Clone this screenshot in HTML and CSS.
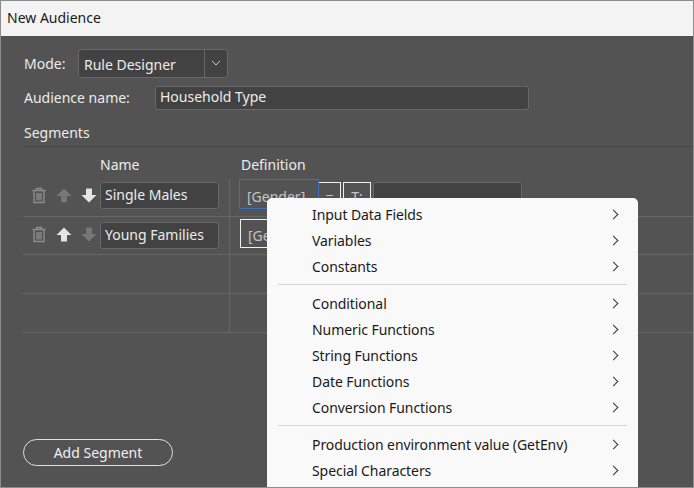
FILE: index.html
```html
<!DOCTYPE html>
<html lang="en">
<head>
    <meta charset="UTF-8">
    <title>New Audience</title>
    <link rel="stylesheet" href="styles.css">
</head>
<body>
    <div class="window">
        <div class="titlebar">New Audience</div>

        <div class="content">
            <div class="mode-row">
                <span class="label">Mode:</span>
                <div class="select">
                    <span class="select-value">Rule Designer</span>
                    <span class="select-arrow">
                        <svg width="10" height="6" viewBox="0 0 10 6"><path d="M1 1l4 4 4-4" fill="none" stroke="#c8c8c8" stroke-width="1"/></svg>
                    </span>
                </div>
            </div>

            <div class="name-row">
                <span class="label">Audience name:</span>
                <div class="field name-field">Household Type</div>
            </div>

            <div class="section-title">Segments</div>

            <div class="table-head">
                <span class="head-name">Name</span>
                <span class="head-def">Definition</span>
            </div>

            <div class="seg-row first">
                <div class="seg-tools">
                    <svg class="icon" width="16" height="17" viewBox="0 0 16 17"><use href="#trash"/></svg>
                    <svg class="icon" width="16" height="15" viewBox="0 0 16 15"><polygon points="8,0.5 15.5,8 11,8 11,14.5 5,14.5 5,8 0.5,8" fill="#777777"/></svg>
                    <svg class="icon" width="16" height="15" viewBox="0 0 16 15"><polygon points="8,14.5 15.5,7 11,7 11,0.5 5,0.5 5,7 0.5,7" fill="#e4e4e4"/></svg>
                </div>
                <div class="field seg-name">Single Males</div>
                <div class="seg-def">
                    <div class="def-box def-active">[Gender]</div>
                    <div class="def-op">=</div>
                    <div class="def-op def-type">T:</div>
                    <div class="field def-value"></div>
                </div>
            </div>

            <div class="seg-row second">
                <div class="seg-tools">
                    <svg class="icon" width="16" height="17" viewBox="0 0 16 17"><use href="#trash"/></svg>
                    <svg class="icon" width="16" height="15" viewBox="0 0 16 15"><polygon points="8,0.5 15.5,8 11,8 11,14.5 5,14.5 5,8 0.5,8" fill="#e4e4e4"/></svg>
                    <svg class="icon" width="16" height="15" viewBox="0 0 16 15"><polygon points="8,14.5 15.5,7 11,7 11,0.5 5,0.5 5,7 0.5,7" fill="#777777"/></svg>
                </div>
                <div class="field seg-name">Young Families</div>
                <div class="seg-def">
                    <div class="def-box def-white">[Gender]</div>
                </div>
            </div>

            <div class="seg-row empty"><div class="seg-def"></div></div>
            <div class="seg-row empty"><div class="seg-def"></div></div>

            <button class="add-btn">Add Segment</button>
        </div>

        <div class="menu">
            <div class="menu-item">Input Data Fields<span class="chev"></span></div>
            <div class="menu-item">Variables<span class="chev"></span></div>
            <div class="menu-item">Constants<span class="chev"></span></div>
            <div class="menu-sep"></div>
            <div class="menu-item">Conditional<span class="chev"></span></div>
            <div class="menu-item">Numeric Functions<span class="chev"></span></div>
            <div class="menu-item">String Functions<span class="chev"></span></div>
            <div class="menu-item">Date Functions<span class="chev"></span></div>
            <div class="menu-item">Conversion Functions<span class="chev"></span></div>
            <div class="menu-sep"></div>
            <div class="menu-item">Production environment value (GetEnv)<span class="chev"></span></div>
            <div class="menu-item">Special Characters<span class="chev"></span></div>
        </div>
    </div>

    <svg width="0" height="0" class="defs">
        <symbol id="trash" viewBox="0 0 16 17">
            <path d="M1.5 3.5h13M5.5 3V1.5h5V3M3 4v11.5h10V4M6 6v7.5M8 6v7.5M10 6v7.5" fill="none" stroke="#8c8c8c" stroke-width="1.4"/>
        </symbol>
    </svg>
</body>
</html>
```

FILE: styles.css
```css
* {
    margin: 0;
    padding: 0;
    box-sizing: border-box;
}

html, body {
    width: 694px;
    height: 488px;
    overflow: hidden;
}

body {
    font-family: 'Noto Sans', 'Open Sans', sans-serif;
    font-size: 14px;
    color: #ececec;
    background: #535353;
}

.defs {
    position: absolute;
}

.window {
    position: relative;
    width: 694px;
    height: 488px;
    border: 1px solid #8c8c8c;
    display: flex;
    flex-direction: column;
    overflow: hidden;
}

.titlebar {
    height: 35px;
    flex: none;
    background: #f3f3f3;
    color: #1a1a1a;
    padding: 0 6px;
    line-height: 34px;
}

.content {
    flex: 1;
    background: #535353;
    padding: 12px 0 0 22px;
}

.label {
    display: block;
    padding-left: 1px;
}

.mode-row {
    display: flex;
    align-items: center;
    height: 30px;
}

.mode-row .label {
    width: 55px;
}

.select {
    display: flex;
    width: 150px;
    height: 29px;
    background: #424242;
    border: 1px solid #686868;
    border-radius: 3px;
}

.select-value {
    flex: 1;
    padding-left: 5px;
    line-height: 29px;
}

.select-arrow {
    width: 23px;
    border-left: 1px solid #686868;
    display: flex;
    align-items: center;
    justify-content: center;
}

.field {
    background: #424242;
    border: 1px solid #686868;
    border-radius: 3px;
    padding-left: 4px;
}

.name-row {
    display: flex;
    align-items: center;
    height: 25px;
    margin-top: 7px;
}

.name-row .label {
    width: 132px;
}

.name-field {
    width: 374px;
    height: 24px;
    line-height: 20px;
}

.section-title {
    height: 25px;
    line-height: 21px;
    margin-top: 12px;
    padding-left: 1px;
    border-bottom: 1px solid #4a4a4a;
}

.table-head {
    height: 32px;
    display: flex;
    align-items: flex-end;
    padding: 0 0 4px 77px;
    line-height: 20px;
}

.head-name {
    width: 141px;
}

.seg-row {
    display: flex;
    height: 38px;
    border-bottom: 1px solid #666666;
}

.seg-row.empty {
    height: 39px;
}

.seg-tools {
    width: 77px;
    display: flex;
    align-items: center;
    gap: 9px;
    padding-left: 8px;
}

.first .seg-tools {
    height: 32px;
}

.second .seg-tools {
    height: 34px;
}

.seg-tools .icon {
    flex: none;
}

.seg-name {
    width: 119px;
    height: 27px;
    line-height: 23px;
}

.first .seg-name {
    margin-top: 3px;
}

.second .seg-name {
    margin-top: 5px;
}

.seg-def {
    margin-left: 10px;
    height: 100%;
    border-left: 1px solid #666666;
    padding-left: 9px;
    display: flex;
    align-items: flex-start;
    flex: 1;
}

.second .seg-def {
    padding: 2px 0 0 10px;
}

.empty .seg-def {
    margin-left: 206px;
}

.def-box {
    width: 80px;
    height: 30px;
    line-height: 33px;
    padding-left: 7px;
    color: #c4c4c4;
    border: 1px solid #3f6fb8;
}

.def-white {
    height: 29px;
    line-height: 31px;
    border-color: #f0f0f0;
}

.def-op {
    width: 22px;
    height: 27px;
    margin-top: 3px;
    border-top: 1px solid #f0f0f0;
    border-right: 1px solid #f0f0f0;
    text-align: center;
    line-height: 27px;
    color: #c4c4c4;
}

.def-type {
    width: 28px;
    margin-left: 2px;
    border-left: 1px solid #f0f0f0;
}

.def-value {
    width: 149px;
    height: 26px;
    margin: 3px 0 0 2px;
}

.add-btn {
    display: block;
    width: 150px;
    height: 27px;
    margin-top: 106px;
    font: inherit;
    color: #f0f0f0;
    background: transparent;
    border: 1px solid #e0e0e0;
    border-radius: 14px;
}

/* popup over the dialog */
.menu {
    position: absolute;
    left: 266px;
    top: 197px;
    width: 371px;
    height: 300px;
    padding: 4px 23px 0 0;
    background: #f9f9f9;
    border-radius: 5px 5px 0 0;
    color: #1a1a1a;
    letter-spacing: -0.07px;
}

.menu-item {
    height: 26px;
    line-height: 25px;
    padding-left: 45px;
    position: relative;
}

.chev {
    position: absolute;
    right: -2px;
    top: 8.5px;
    width: 7px;
    height: 7px;
    border-top: 1.5px solid #333;
    border-right: 1.5px solid #333;
    transform: rotate(45deg);
}

.menu-sep {
    height: 11px;
    margin-left: 11px;
    margin-right: -12px;
    background: linear-gradient(#d6d6d6, #d6d6d6) no-repeat 0 4px / 100% 1px;
}
```
